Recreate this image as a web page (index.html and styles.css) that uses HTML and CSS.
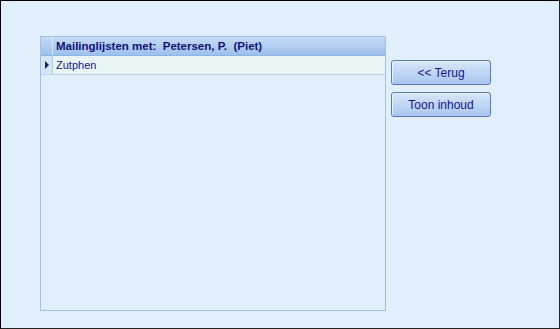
FILE: index.html
```html
<!DOCTYPE html>
<html lang="nl">
  <head>
    <meta charset="UTF-8" />
    <title>Mailinglijsten</title>
    <link rel="stylesheet" href="styles.css">
  </head>
  <body>
    <div class="window">
      <div class="grid">
        <div class="row head">
          <div class="indicator"></div>
          <div class="cell">Mailinglijsten met:&nbsp; Petersen, P.&nbsp; (Piet)</div>
        </div>
        <div class="row data">
          <div class="indicator"><span class="arrow"></span></div>
          <div class="cell">Zutphen</div>
        </div>
      </div>
      <div class="buttons">
        <button class="btn">&lt;&lt; Terug</button>
        <button class="btn">Toon inhoud</button>
      </div>
    </div>
  </body>
</html>
```

FILE: styles.css
```css
body {
  margin: 0;
  font-family: "Liberation Sans", Arial, sans-serif;
  font-size: 11px;
}
.window {
  width: 560px;
  height: 329px;
  box-sizing: border-box;
  border-top: 1px solid #000;
  border-left: 1px solid #000;
  border-right: 1px solid #222;
  border-bottom: 1px solid #222;
  background-color: #e1effd;
  padding: 35px 0 0 39px;
  display: flex;
  align-items: flex-start;
}
.grid {
  width: 346px;
  height: 275px;
  box-sizing: border-box;
  border: 1px solid #9ebfe9;
}
.row {
  display: flex;
  border-bottom: 1px solid #b8d2f0;
}
.row .indicator {
  width: 11px;
  flex: none;
  border-right: 1px solid #b0cced;
  display: flex;
  align-items: center;
  justify-content: center;
}
.row .cell {
  flex: 1;
  padding-left: 3px;
  color: #15158c;
}
.head {
  height: 18px;
  background: linear-gradient(#c6dbf6, #9dc0ec);
  border-bottom: 1px solid #8fb3e2;
}
.head .indicator {
  background: linear-gradient(#c6dbf6, #9dc0ec);
  border-right-color: #d7e6fa;
}
.head .cell {
  font-weight: bold;
  font-size: 11.5px;
  line-height: 18px;
  color: #101078;
}
.data {
  height: 18px;
  background-color: #e9f5f5;
}
.data .indicator {
  background: #d6e6fa;
}
.data .cell {
  line-height: 18px;
}
.arrow {
  width: 0;
  height: 0;
  border-top: 4px solid transparent;
  border-bottom: 4px solid transparent;
  border-left: 4px solid #0d2a5c;
}
.buttons {
  display: flex;
  flex-direction: column;
  gap: 7px;
  margin: 24px 0 0 5px;
}
.btn {
  width: 100px;
  height: 25px;
  box-sizing: border-box;
  border: 1px solid #5a79b8;
  border-radius: 3px;
  background: linear-gradient(#d6e6fa, #a9c6ef);
  box-shadow: inset 1px 1px 0 #eaf2fd;
  color: #15158c;
  font-family: "Liberation Sans", Arial, sans-serif;
  font-size: 12px;
  padding: 0;
}
```
